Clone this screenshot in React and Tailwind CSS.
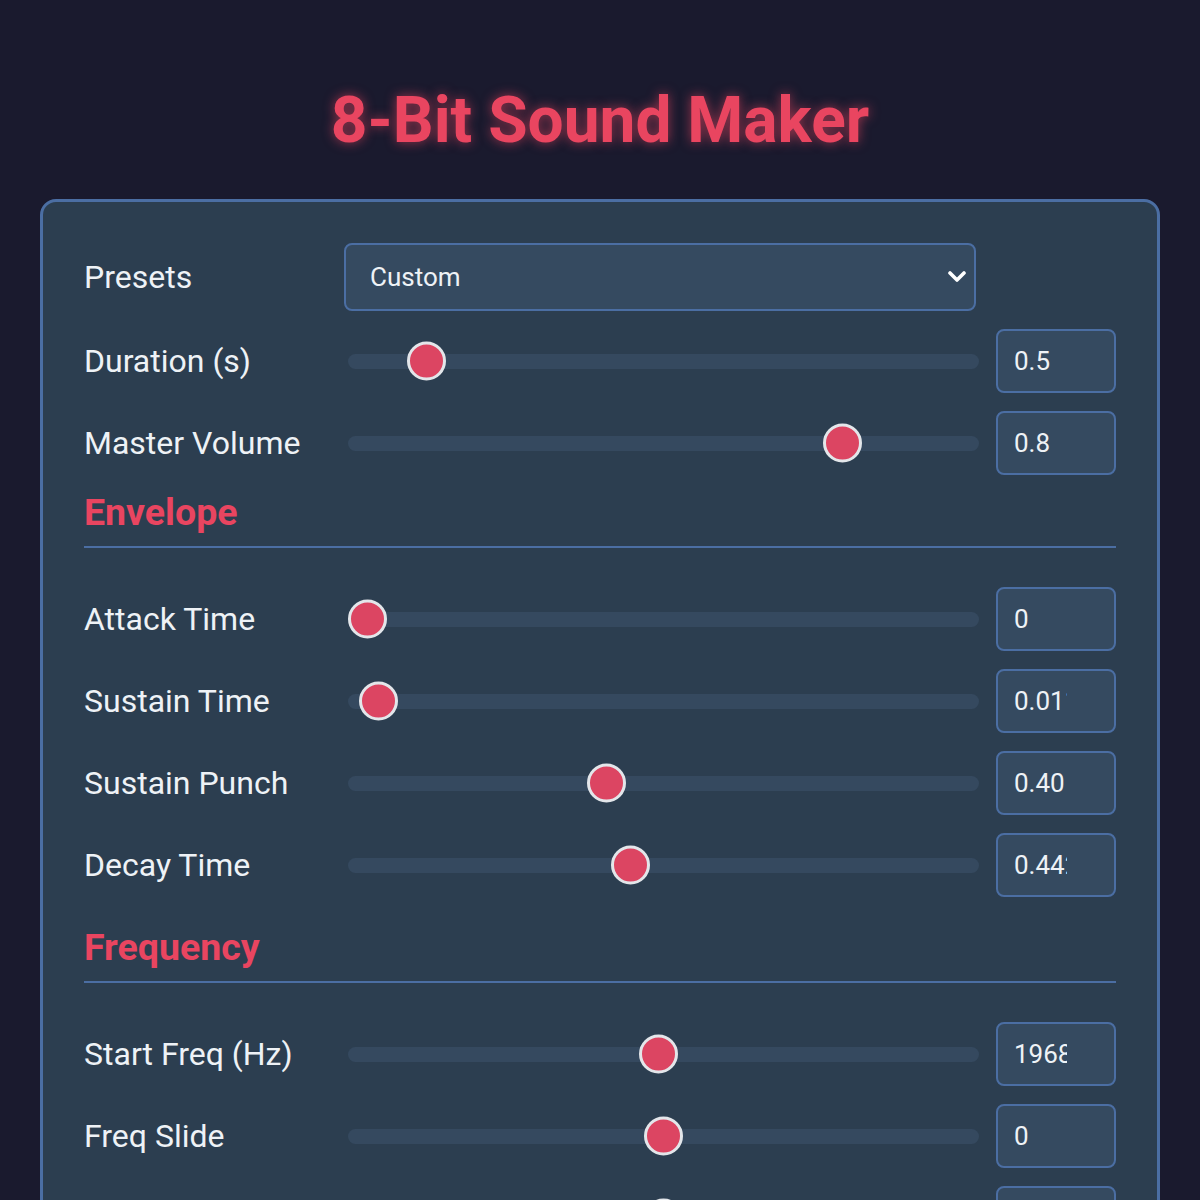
import React from 'react';

const Slider = ({ pos }) => (
  <div className="relative h-10 flex items-center ml-1 -mr-[3px]">
    <div className="w-full h-[15px] rounded-full bg-[#35495f]" />
    <div
      className="absolute top-1/2 -translate-y-1/2 w-[39px] h-[39px] rounded-full bg-[#dc4562] border-[3px] border-[#e3e6ea]"
      style={{ left: `calc(${pos} * (100% - 39px))` }}
    />
  </div>
);

const Row = ({ label, pos, value }) => (
  <div className="grid grid-cols-[240px_1fr_120px] gap-x-5 items-center h-16 mb-[18px]">
    <label className="text-[32px] text-[#eef2f6]">{label}</label>
    <Slider pos={pos} />
    <div className="h-16 rounded-lg border-2 border-[#4b6ea3] bg-[#354a60] flex items-center pl-4">
      <span className="inline-block w-[53px] overflow-hidden whitespace-nowrap text-[26px] text-[#eef2f6]">{value}</span>
    </div>
  </div>
);

const Heading = ({ children, className }) => (
  <h2 className={`text-[37.5px] font-bold leading-[43px] text-[#e94560] pb-3 border-b-2 border-[#4b6ea3] mb-[39px] ${className}`}>{children}</h2>
);

export default function App() {
  return (
    <div className="min-h-screen bg-[#1a1a2e] font-['Roboto',sans-serif] px-10 overflow-hidden">
      <h1 className="pt-[83px] mb-[41px] text-center text-[64px] font-bold leading-[75px] text-[#e94560] [text-shadow:0_0_12px_rgba(233,69,96,0.65)]">8-Bit Sound Maker</h1>

      <div className="bg-[#2c3e50] border-[3px] border-[#4b6ea3] rounded-2xl p-[41px]">
        <div className="grid grid-cols-[240px_1fr_120px] gap-x-5 items-center h-[68px] mb-[18px]">
          <label className="text-[32px] text-[#eef2f6]">Presets</label>
          <div className="h-[68px] rounded-lg border-2 border-[#4b6ea3] bg-[#354a60] flex items-center justify-between pl-6 pr-2">
            <span className="text-[26px] text-[#eef2f6]">Custom</span>
            <svg width="18" height="12" viewBox="0 0 18 12" fill="none">
              <polyline points="2,2 9,9 16,2" stroke="#ffffff" strokeWidth="3.6" strokeLinecap="round" strokeLinejoin="round" />
            </svg>
          </div>
          <div />
        </div>
        <Row label="Duration (s)" pos={0.099} value="0.5" />
        <Row label="Master Volume" pos={0.803} value="0.8" />

        <Heading className="mt-[-2px]">Envelope</Heading>
        <Row label="Attack Time" pos={0} value="0" />
        <Row label="Sustain Time" pos={0.018} value="0.0117" />
        <Row label="Sustain Punch" pos={0.403} value="0.40" />
        <Row label="Decay Time" pos={0.444} value="0.442" />

        <Heading className="mt-[29px]">Frequency</Heading>
        <Row label="Start Freq (Hz)" pos={0.491} value="1968" />
        <Row label="Freq Slide" pos={0.5} value="0" />
        <Row label="Delta Slide" pos={0.5} value="0" />
        <Row label="Min Freq (Hz)" pos={0.2} value="20" />
      </div>
    </div>
  );
}
